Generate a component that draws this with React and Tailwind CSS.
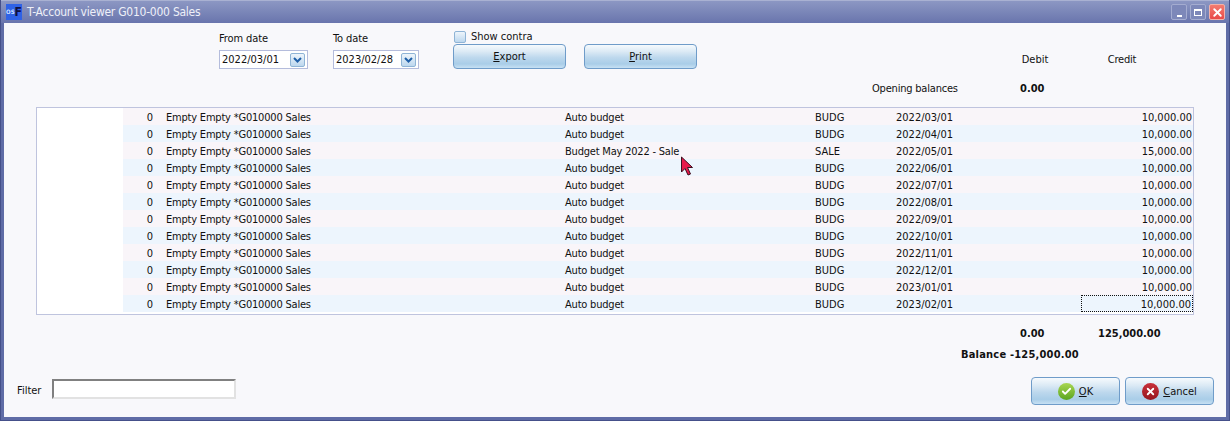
import React from "react";
import { Check, X } from "lucide-react";

const rows = [
  ["Auto budget", "BUDG", "2022/03/01", "10,000.00"],
  ["Auto budget", "BUDG", "2022/04/01", "10,000.00"],
  ["Budget May 2022 - Sale", "SALE", "2022/05/01", "15,000.00"],
  ["Auto budget", "BUDG", "2022/06/01", "10,000.00"],
  ["Auto budget", "BUDG", "2022/07/01", "10,000.00"],
  ["Auto budget", "BUDG", "2022/08/01", "10,000.00"],
  ["Auto budget", "BUDG", "2022/09/01", "10,000.00"],
  ["Auto budget", "BUDG", "2022/10/01", "10,000.00"],
  ["Auto budget", "BUDG", "2022/11/01", "10,000.00"],
  ["Auto budget", "BUDG", "2022/12/01", "10,000.00"],
  ["Auto budget", "BUDG", "2023/01/01", "10,000.00"],
  ["Auto budget", "BUDG", "2023/02/01", "10,000.00"],
];

const btn =
  "flex items-center justify-center rounded-[4px] border border-[#6f9cc9] bg-[linear-gradient(#f6fafd_0%,#dceaf5_28%,#bdd8ed_55%,#a9cde8_82%,#c6e0f3_100%)] text-[#111]";

function DateBox({ label, value, width }) {
  return (
    <div className="flex flex-col">
      <span className="h-[20px] pt-[1px] leading-[15px] tracking-[-0.1px]">{label}</span>
      <div className={`flex h-[19px] items-center justify-between border border-[#b4bcdc] bg-white pl-[2px] pr-[2px] ${width}`}>
        <span>{value}</span>
        <span className="flex h-[14px] w-[15px] items-center justify-center rounded-[2px] border border-[#8fb4d6] bg-[linear-gradient(#eef5fb,#bcd7ee)]">
          <svg width="9" height="6" viewBox="0 0 9 6">
            <path d="M1 1l3.5 3.5L8 1" fill="none" stroke="#1f5fa8" strokeWidth="2" />
          </svg>
        </span>
      </div>
    </div>
  );
}

function WinButton({ children, className }) {
  return (
    <div className={`flex h-[16px] w-[16px] justify-center rounded-[2px] border ${className}`}>
      {children}
    </div>
  );
}

export default function App() {
  return (
    <div className="relative flex h-[421px] w-[1230px] flex-col overflow-hidden border border-t-0 border-[#45508a] bg-[#5f6ca6] text-[11px] leading-[17px] text-[#111] font-['DejaVu_Sans_Condensed','DejaVu_Sans',sans-serif] [font-stretch:condensed]">
      {/* Title bar */}
      <div className="flex h-[23px] shrink-0 items-center justify-between border-t border-[#a9b1d2] bg-[linear-gradient(#8c97c3,#6975ad)] pl-[5px] pr-[4px]">
        <div className="flex items-center gap-[5px]">
          <div className="flex h-[16px] w-[16px] items-center justify-center bg-[#2f62e6] leading-none">
            <span className="text-[6px] font-bold text-[#cfe0ff]">OS</span>
            <span className="text-[12px] font-bold text-[#101040]">F</span>
          </div>
          <span className="text-[12px] tracking-[-0.25px] text-[#eef0f8]">T-Account viewer G010-000 Sales</span>
        </div>
        <div className="flex gap-[3px]">
          <WinButton className="items-end border-[#a4acd0] bg-[#7d88b9] pb-[2px]">
            <div className="h-[2px] w-[5px] bg-white" />
          </WinButton>
          <WinButton className="items-center border-[#a4acd0] bg-[#7d88b9]">
            <div className="h-[7px] w-[8px] border border-t-2 border-white" />
          </WinButton>
          <WinButton className="items-center border-[#f2b0a8] bg-[linear-gradient(#f47c70,#e84a48)]">
            <X size={13} strokeWidth={3.5} color="white" />
          </WinButton>
        </div>
      </div>

      {/* Body */}
      <div className="mx-[3px] mb-[3px] flex flex-1 flex-col bg-[#f8f8fb]">
        {/* Top controls */}
        <div className="flex h-[84px] shrink-0 pl-[215px]">
          <div className="pt-[7px]">
            <DateBox label="From date" value="2022/03/01" width="w-[89px]" />
          </div>
          <div className="ml-[25px] pt-[7px]">
            <DateBox label="To date" value="2023/02/28" width="w-[86px]" />
          </div>
          <div className="ml-[34px] flex flex-col pt-[6px]">
            <div className="flex h-[15px] items-center gap-[5px] pl-[1px]">
              <div className="h-[12px] w-[12px] rounded-[2px] border border-[#8fb4d6] bg-[linear-gradient(#eef5fb,#bcd7ee)]" />
              <span>Show contra</span>
            </div>
            <div className="flex gap-[18px]">
              <div className={`${btn} h-[25px] w-[113px]`}>
                <span><u>E</u>xport</span>
              </div>
              <div className={`${btn} h-[25px] w-[113px]`}>
                <span><u>P</u>rint</span>
              </div>
            </div>
          </div>
          <div className="ml-auto flex w-[354px] flex-col">
            <div className="flex pt-[28px]">
              <span className="ml-[143px] w-[40px] text-center">Debit</span>
              <span className="ml-[47px] w-[40px] text-center tracking-[-0.2px]">Credit</span>
            </div>
            <div className="mt-[12px] flex">
              <span className="w-[148px] tracking-[-0.2px]">Opening balances</span>
              <span className="font-bold">0.00</span>
            </div>
          </div>
        </div>

        {/* Ledger grid */}
        <div className="mx-[32px] h-[208px] shrink-0 border border-[#bfc4de] bg-white">
          {rows.map((r, i) => (
            <div
              key={r[2]}
              className={`ml-[86px] flex h-[17px] pt-[1px] ${i % 2 === 0 ? "bg-[#f9f5f9]" : "bg-[#edf5fd]"}`}
            >
              <span className="w-[30px] text-right">0</span>
              <span className="ml-[13px] w-[399px] whitespace-nowrap tracking-[-0.2px]">Empty Empty *G010000 Sales</span>
              <span className="w-[250px] whitespace-nowrap tracking-[-0.2px]">{r[0]}</span>
              <span className="w-[81px]">{r[1]}</span>
              <span className="w-[185px]">{r[2]}</span>
              <span
                className={`-mt-[1px] flex-1 pr-[1px] text-right ${i === rows.length - 1 ? "border border-dotted border-[#111]" : "pt-[1px]"}`}
              >
                {r[3]}
              </span>
            </div>
          ))}
        </div>

        {/* Totals */}
        <div className="flex h-[27px] shrink-0 items-end font-bold">
          <span className="ml-[1016px] w-[40px]">0.00</span>
          <span className="ml-[38px]">125,000.00</span>
        </div>
        <div className="mt-[4px] flex h-[17px] shrink-0 items-center font-bold">
          <span className="ml-[957px] tracking-[0.2px]">Balance -125,000.00</span>
        </div>

        {/* Footer */}
        <div className="mt-[14px] flex items-start pl-[13px]">
          <span className="mt-[5px] w-[35px]">Filter</span>
          <div className="mt-[2px] h-[20px] w-[184px] border-2 border-[#e2e2e2] border-l-[#808080] border-t-[#808080] bg-white" />
          <div className="ml-auto mr-[12px] flex gap-[5px]">
            <div className={`${btn} h-[28px] w-[89px] gap-[4px]`}>
              <span className="flex h-[17px] w-[17px] items-center justify-center rounded-full bg-[linear-gradient(#a8d652,#5aa520)]">
                <Check size={11} strokeWidth={4} color="white" />
              </span>
              <span><u>O</u>K</span>
            </div>
            <div className={`${btn} h-[28px] w-[89px] gap-[4px]`}>
              <span className="flex h-[17px] w-[17px] items-center justify-center rounded-full bg-[linear-gradient(#c8303a,#96161f)]">
                <X size={11} strokeWidth={4} color="white" />
              </span>
              <span><u>C</u>ancel</span>
            </div>
          </div>
        </div>
      </div>

      {/* Mouse pointer over the grid */}
      <svg className="absolute left-[679px] top-[156px]" width="15" height="21" viewBox="0 0 15 21">
        <path d="M1.5 1v15l3.5-3.5 3 6.5 2.5-1-3-6.5h5z" fill="#e8184a" stroke="#3a1020" strokeWidth="1" />
      </svg>
    </div>
  );
}
